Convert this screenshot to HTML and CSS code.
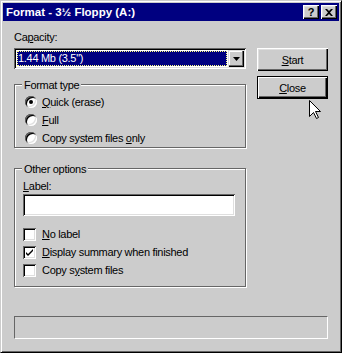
FILE: index.html
```html
<!DOCTYPE html>
<html lang="en">
<head>
    <meta charset="UTF-8">
    <title>Format - 3½ Floppy (A:)</title>
    <link rel="stylesheet" href="styles.css">
</head>
<body>

    <div class="window">
        <!-- Caption -->
        <div class="titlebar">
            <span class="title">Format - 3½ Floppy (A:)</span>
            <div class="caption-buttons">
                <span class="cap-btn help">?</span>
                <span class="cap-btn">
                    <svg width="8" height="7" viewBox="0 0 8 7"><path d="M0 0h2l2 2 2-2h2L5 3.5 8 7H6L4 5 2 7H0l3-3.5z" fill="#000"/></svg>
                </span>
            </div>
        </div>

        <div class="content">
            <div class="top">
                <div class="left">
                    <div class="label">Ca<u>p</u>acity:</div>
                    <div class="combo">
                        <span class="combo-value">1.44 Mb (3.5")</span>
                        <span class="combo-arrow">
                            <svg width="7" height="4" viewBox="0 0 7 4"><path d="M0 0h7L3.5 4z" fill="#000"/></svg>
                        </span>
                    </div>

                    <!-- Format type -->
                    <div class="group group-format">
                        <div class="group-title">Format type</div>
                        <div class="options">
                            <div class="option"><span class="radio checked"></span><span><u>Q</u>uick (erase)</span></div>
                            <div class="option"><span class="radio"></span><span><u>F</u>ull</span></div>
                            <div class="option"><span class="radio"></span><span>Copy system files <u>o</u>nly</span></div>
                        </div>
                    </div>

                    <!-- Other options -->
                    <div class="group group-other">
                        <div class="group-title">Other options</div>
                        <div class="label"><u>L</u>abel:</div>
                        <div class="textbox"></div>
                        <div class="options">
                            <div class="option"><span class="check"></span><span><u>N</u>o label</span></div>
                            <div class="option">
                                <span class="check">
                                    <svg width="9" height="9" viewBox="0 0 9 9"><path d="M1 4l2 2 5-5v2L3 8 1 6z" fill="#000"/></svg>
                                </span>
                                <span><u>D</u>isplay summary when finished</span>
                            </div>
                            <div class="option"><span class="check"></span><span>Copy s<u>y</u>stem files</span></div>
                        </div>
                    </div>
                </div>

                <div class="buttons">
                    <div class="btn"><u>S</u>tart</div>
                    <div class="btn default"><u>C</u>lose</div>
                </div>
            </div>

            <div class="status"></div>
        </div>

        <svg class="cursor" width="13" height="21" viewBox="0 0 13 21">
            <path d="M0.5 0.5V16.5L4.5 12.5L7.5 18.5L9.5 17.5L6.5 11.5H11.5Z" fill="#fff" stroke="#000" stroke-width="1"/>
        </svg>
    </div>

</body>
</html>
```

FILE: styles.css
```css
/* Win95 dialog */
body {
    margin: 0;
    font-family: "Liberation Sans", Arial, sans-serif;
    font-size: 11px;
    letter-spacing: -0.3px;
    color: #000;
}
u {
    text-underline-offset: 1px;
}
.window {
    position: relative;
    width: 342px;
    height: 353px;
    box-sizing: border-box;
    background: #cccccc;
    border: 1px solid;
    border-color: #cccccc #000 #000 #cccccc;
    box-shadow: inset 1px 1px #fff, inset -1px -1px #666;
    padding: 2px;
    display: flex;
    flex-direction: column;
}
.titlebar {
    height: 18px;
    background: #000080;
    color: #fff;
    display: flex;
    align-items: center;
    justify-content: space-between;
    padding: 0 2px 0 3px;
}
.title {
    font-weight: bold;
    font-size: 11.5px;
    letter-spacing: 0;
}
.caption-buttons {
    display: flex;
    gap: 2px;
}
.cap-btn {
    width: 16px;
    height: 14px;
    box-sizing: border-box;
    background: #cccccc;
    box-shadow: inset 1px 1px #fff, inset -1px -1px #000, inset -2px -2px #666, inset 2px 2px #dfdfdf;
    display: flex;
    align-items: center;
    justify-content: center;
    color: #000;
}
.help {
    font-weight: bold;
    font-size: 11px;
    letter-spacing: 0;
    line-height: 14px;
}
.content {
    flex: 1;
    padding: 0 11px;
}
.top {
    display: flex;
    justify-content: space-between;
}
.left {
    width: 232px;
    padding-top: 10px;
}
.label {
    line-height: 13px;
}
.combo {
    margin-top: 4px;
    height: 21px;
    box-sizing: border-box;
    padding: 2px;
    background: #fff;
    box-shadow: inset 1px 1px #666, inset -1px -1px #fff, inset 2px 2px #000, inset -2px -2px #dfdfdf;
    display: flex;
}
.combo-value {
    flex: 1;
    margin: 1px;
    padding-left: 1px;
    background: #000080;
    color: #fff;
    line-height: 15px;
    outline: 1px dotted #ffff80;
    outline-offset: -1px;
}
.combo-arrow {
    width: 16px;
    height: 17px;
    box-sizing: border-box;
    background: #cccccc;
    box-shadow: inset 1px 1px #dfdfdf, inset -1px -1px #000, inset -2px -2px #666, inset 2px 2px #fff;
    display: flex;
    align-items: center;
    justify-content: center;
}
.group {
    border: 1px solid #666;
    box-shadow: inset 1px 1px #fff, 1px 1px #fff;
}
.group-title {
    width: fit-content;
    margin: -6px 0 0 7px;
    padding: 0 2px;
    background: #cccccc;
    line-height: 13px;
}
.group-format {
    margin-top: 15px;
}
.group-format .options {
    margin-top: 1px;
    padding-left: 10px;
}
.group-format .option {
    gap: 5px;
}
.group-other {
    margin-top: 20px;
    padding-bottom: 7px;
}
.group-other .label {
    margin: 4px 0 0 8px;
}
.group-other .options {
    margin-top: 9px;
    padding-left: 8px;
}
.group-other .option {
    gap: 6px;
}
.textbox {
    margin: 1px 0 0 8px;
    width: 212px;
    height: 22px;
    background: #fff;
    box-shadow: inset 1px 1px #666, inset -1px -1px #fff, inset 2px 2px #000, inset -2px -2px #dfdfdf;
}
.option {
    height: 18px;
    display: flex;
    align-items: center;
}
.radio {
    position: relative;
    width: 12px;
    height: 12px;
    border-radius: 50%;
    background: #fff;
    box-shadow: inset 1px 1px #666, inset -1px -1px #fff, inset 2px 2px #000, inset -2px -2px #dfdfdf;
}
.radio.checked::after {
    content: "";
    position: absolute;
    left: 4px;
    top: 4px;
    width: 4px;
    height: 4px;
    border-radius: 50%;
    background: #000;
}
.check {
    width: 13px;
    height: 13px;
    background: #fff;
    box-shadow: inset 1px 1px #666, inset -1px -1px #fff, inset 2px 2px #000, inset -2px -2px #dfdfdf;
    display: flex;
    align-items: center;
    justify-content: center;
}
.buttons {
    width: 71px;
    padding-top: 27px;
    display: flex;
    flex-direction: column;
    gap: 5px;
}
.btn {
    height: 23px;
    box-sizing: border-box;
    box-shadow: inset 1px 1px #fff, inset -1px -1px #000, inset -2px -2px #666, inset 2px 2px #dfdfdf;
    display: flex;
    align-items: center;
    justify-content: center;
}
.btn.default {
    border: 1px solid #000;
    box-shadow: inset 1px 1px #fff, inset -1px -1px #000, inset -2px -2px #666;
}
.status {
    margin-top: 29px;
    height: 23px;
    box-sizing: border-box;
    border: 1px solid;
    border-color: #666 #fff #fff #666;
}
.cursor {
    position: absolute;
    left: 308px;
    top: 99px;
}
```
